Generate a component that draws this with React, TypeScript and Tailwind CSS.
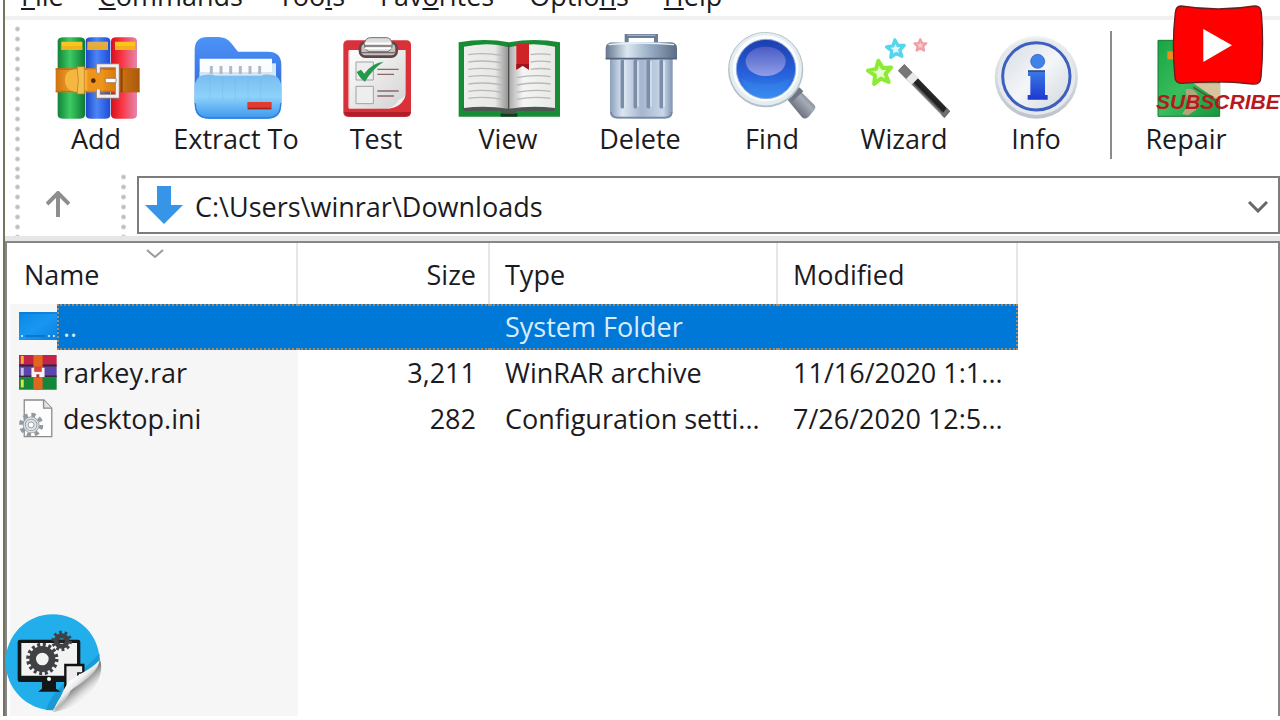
import { useState } from 'react';
import type { ReactNode } from 'react';

function ToolIcon({ x, children }: { x: number; children: ReactNode }) {
  return (
    <svg viewBox={`${x} 93 330 270`} className="w-[110px] h-[90px]" aria-hidden="true">
      {children}
    </svg>
  );
}

function AddIcon() {
  return (
    <ToolIcon x={123}>
      <defs>
        <linearGradient id="bookGreen">
          <stop offset="0" stopColor="#12813a" />
          <stop offset=".45" stopColor="#3ecb63" />
          <stop offset="1" stopColor="#0c7a35" />
        </linearGradient>
        <linearGradient id="bookBlue">
          <stop offset="0" stopColor="#1c46c9" />
          <stop offset=".45" stopColor="#4b86f7" />
          <stop offset="1" stopColor="#1d4bd6" />
        </linearGradient>
        <linearGradient id="bookRed">
          <stop offset="0" stopColor="#d3101f" />
          <stop offset=".4" stopColor="#fb3340" />
          <stop offset="1" stopColor="#e487ae" />
        </linearGradient>
        <linearGradient id="belt">
          <stop offset="0" stopColor="#d2730d" />
          <stop offset=".3" stopColor="#f9b845" />
          <stop offset=".6" stopColor="#e88a12" />
          <stop offset="1" stopColor="#a9580d" />
        </linearGradient>
      </defs>
      <path d="M173 124q0-12 18-12h46q18 0 18 12v220q0 12-18 12h-46q-18 0-18-12z" fill="url(#bookGreen)" />
      <path d="M257 124q0-12 16-12h42q16 0 16 12v220q0 12-16 12h-42q-16 0-16-12z" fill="url(#bookBlue)" />
      <path d="M333 124q0-12 16-12h46q16 0 16 12v220q0 12-16 12h-46q-16 0-16-12z" fill="url(#bookRed)" />
      <path d="M184 125h63v25h-63zM345 125h61v25h-61z" fill="#f8c61c" />
      <path d="M262 125h62v25h-62z" fill="#dfae4b" />
      <path d="M184 138h63v12h-63zM345 138h61v12h-61zM262 138h62v12h-62z" fill="#eda51d" opacity=".6" />
      <path d="M167 205h252v72H167z" fill="url(#belt)" />
      <path d="M167 205h252v5H167zM167 272h252v5H167z" fill="#b8650b" opacity=".7" />
      <path d="M195 240q0-34 38-32v68q-38-2-38-36z" fill="#f5b73f" />
      <path d="M231 200h22v82h-22q8-41 0-82z" fill="#f2c050" stroke="#bf7416" strokeWidth="2" />
      <path d="M262 208h48v66h-48z" fill="#ef941b" />
      <circle cx="280" cy="242" r="7" fill="#552709" />
      <path d="M295 218v-21h57v92h-57v-21" fill="none" stroke="#8f7a76" strokeWidth="14" />
      <path d="M295 218v-21h57v92h-57v-21" fill="none" stroke="#f1eff2" strokeWidth="9" />
      <path d="M316 235h32v13h-32z" fill="#fff" stroke="#8c6552" strokeWidth="2" />
      <path d="M361 205h7v72h-7z" fill="#7c2f0a" opacity=".7" />
    </ToolIcon>
  );
}

function ExtractIcon() {
  return (
    <ToolIcon x={543}>
      <defs>
        <linearGradient id="folderBack" x2="0" y2="1">
          <stop offset="0" stopColor="#4d93f8" />
          <stop offset="1" stopColor="#2f62d8" />
        </linearGradient>
        <linearGradient id="folderFront" x2="0" y2="1">
          <stop offset="0" stopColor="#78bcf0" />
          <stop offset=".5" stopColor="#8dd2fa" />
          <stop offset="1" stopColor="#3c97ee" />
        </linearGradient>
      </defs>
      <path d="M584 150q0-39 39-39h32q24 0 39 19l20 25h90q40 0 40 40v116H584z" fill="url(#folderBack)" />
      <path d="M808 190h20v60h-20z" fill="#d4e6fc" />
      <path d="M599 176h217v90H599z" fill="#fafcff" />
      <path d="M599 216h217v40H599z" fill="#d7e4f1" />
      <g stroke="#b3bac4" strokeWidth="9">
        <path d="M634 198v24M663 198v24M692 198v24M721 198v24M750 198v24M779 198v24" />
      </g>
      <path d="M584 258q4-34 36-34q18-1 26 3h138q8-4 24-3q32 0 36 34v56q0 42-42 42H626q-42 0-42-42z" fill="url(#folderFront)" />
      <path d="M630 232v68M668 232v68M706 232v68M744 232v68M782 232v68" stroke="#69b4ea" strokeWidth="3" opacity=".3" />
      <path d="M586 310q0 44 40 44h176q40 0 40-44" fill="none" stroke="#2f7de0" strokeWidth="4" />
      <rect x="742" y="306" width="73" height="23" rx="2" fill="#df3b31" />
      <path d="M744 325h69" stroke="#a9231d" strokeWidth="4" />
    </ToolIcon>
  );
}

function TestIcon() {
  return (
    <ToolIcon x={3}>
      <defs>
        <linearGradient id="testPaper" x2="1" y2="1">
          <stop offset="0" stopColor="#ffffff" />
          <stop offset="1" stopColor="#d2d2d2" />
        </linearGradient>
      </defs>
      <rect x="70" y="121" width="203" height="229" rx="13" fill="#d9303a" />
      <path d="M72 336q4 14 16 14h168q14 0 16-14z" fill="#b01e29" />
      <path d="M87 150h170v132q-10 42-54 44H87z" fill="url(#testPaper)" />
      <path d="M257 286q-10 34-54 40q26-10 32-26q14-4 22-14z" fill="#f2eeee" />
      <path d="M87 152v172" stroke="#f6c9cb" strokeWidth="4" />
      <path d="M108 186h52v54h-52zM108 259h52v52h-52z" fill="#eeeeee" stroke="#a2a2a2" strokeWidth="3" />
      <path d="M110 216l13-7 10 12q22-32 58-36q-34 22-56 60q-14-8-25-29z" fill="#24984c" />
      <path d="M172 208h64M172 223h50M172 273h64M172 288h50" stroke="#8b6868" strokeWidth="4" />
      <rect x="120" y="128" width="110" height="42" rx="16" fill="#c5c1be" stroke="#5d4848" strokeWidth="8" />
      <rect x="134" y="113" width="82" height="42" rx="17" fill="#dcdcdc" stroke="#6f6b6a" strokeWidth="3" />
      <path d="M134 130h80M134 145h80" stroke="#fff" strokeWidth="5" />
      <path d="M134 138h80M124 158h102" stroke="#736b69" strokeWidth="4" />
    </ToolIcon>
  );
}

function ViewIcon() {
  return (
    <ToolIcon x={399}>
      <defs>
        <linearGradient id="pageLeft">
          <stop offset="0" stopColor="#eeeeec" />
          <stop offset=".7" stopColor="#e8e8e6" />
          <stop offset="1" stopColor="#939393" />
        </linearGradient>
        <linearGradient id="pageRight">
          <stop offset="0" stopColor="#aaaaaa" />
          <stop offset=".3" stopColor="#f5f5f5" />
          <stop offset="1" stopColor="#e8e8e6" />
        </linearGradient>
      </defs>
      <path d="M416 127q80-14 151 0q76-14 153 0v223H416z" fill="#188b35" />
      <path d="M542 340h50v10h-50z" fill="#173a20" />
      <path d="M430 320h274v13H592l-10 8h-30l-10-8H430z" fill="#4d5650" />
      <path d="M432 140q75-16 133 2v184q-70-10-133-2z" fill="url(#pageLeft)" />
      <path d="M567 142q70-18 138-2v184q-70-8-138 2z" fill="url(#pageRight)" />
      <path d="M566 132v198" stroke="#4d4d4d" strokeWidth="4" />
      <g stroke="#b8b8b8" strokeWidth="4" fill="none">
        <path d="M445 164q50-7 103 3M445 186q50-7 103 3M445 208q50-7 103 3M445 230q50-7 103 3M445 252q50-7 103 3M445 274q50-7 103 3M445 295q50-7 103 3" />
        <path d="M632 164q30-5 60 0M632 186q30-5 60 0M632 208q30-5 60 0M590 233q50-10 102-3M590 255q50-10 102-3M590 277q50-10 102-3M590 298q50-10 102-3" />
      </g>
      <path d="M589 131h38v78l-19-12-19 12z" fill="#cf2327" />
      <path d="M589 192h38v17l-19-12-19 12z" fill="#9c1519" />
    </ToolIcon>
  );
}

function DeleteIcon() {
  return (
    <ToolIcon x={795}>
      <defs>
        <linearGradient id="binBody">
          <stop offset="0" stopColor="#8b9fbc" />
          <stop offset=".2" stopColor="#dce6f2" />
          <stop offset=".5" stopColor="#a6b6cd" />
          <stop offset=".85" stopColor="#c8d7e8" />
          <stop offset="1" stopColor="#7e92b0" />
        </linearGradient>
        <linearGradient id="binLid">
          <stop offset="0" stopColor="#64778f" />
          <stop offset=".3" stopColor="#dce7f1" />
          <stop offset=".6" stopColor="#9cb0c7" />
          <stop offset="1" stopColor="#5b6d86" />
        </linearGradient>
      </defs>
      <path d="M920 128v-20h88v20" fill="none" stroke="#6b7c94" strokeWidth="12" />
      <path d="M922 106h84" stroke="#9caec6" strokeWidth="4" />
      <path d="M870 176h188v160q0 20-22 20H892q-22 0-22-20z" fill="url(#binBody)" />
      <path d="M873 336q2 17 22 17h138q20 0 22-17" fill="none" stroke="#7487a3" strokeWidth="5" />
      <path d="M907 184v136M946 184v136M985 184v136M1024 184v136" stroke="#7b8da9" strokeWidth="11" strokeLinecap="round" />
      <path d="M915 184v136M954 184v136M993 184v136M1032 184v136" stroke="#e2ebf5" strokeWidth="4" />
      <path d="M857 144q0-17 24-17h168q22 0 22 17v32H857z" fill="url(#binLid)" />
      <path d="M866 134q96-10 196 0" stroke="#e9f1f8" strokeWidth="4" fill="none" />
      <path d="M857 176h214" stroke="#53657e" strokeWidth="5" />
    </ToolIcon>
  );
}

function FindIcon() {
  return (
    <ToolIcon x={111}>
      <defs>
        <linearGradient id="lens" x2="0" y2="1">
          <stop offset="0" stopColor="#1d3eae" />
          <stop offset=".6" stopColor="#2862dc" />
          <stop offset="1" stopColor="#368ff0" />
        </linearGradient>
        <linearGradient id="lensShine" x2="0" y2="1">
          <stop offset="0" stopColor="#4a5cc4" />
          <stop offset="1" stopColor="#8f9ee8" />
        </linearGradient>
        <linearGradient id="handle" x1="0" y1="1" x2="1" y2="0">
          <stop offset="0" stopColor="#373b44" />
          <stop offset=".6" stopColor="#a6abb8" />
          <stop offset="1" stopColor="#555964" />
        </linearGradient>
      </defs>
      <path d="M320 296l34-30 50 50q6 8-6 20l-12 14q-12 10-20 2z" fill="url(#handle)" />
      <path d="M326 290l32-28 12 12-34 32z" fill="#6f7685" />
      <circle cx="257" cy="209" r="113" fill="#b4c1c7" />
      <circle cx="257" cy="207" r="109" fill="#e4eef2" />
      <circle cx="257" cy="205" r="99" fill="#fbfdfd" />
      <circle cx="258" cy="207" r="89" fill="url(#lens)" stroke="#8aa9df" strokeWidth="3" />
      <ellipse cx="257" cy="184" rx="60" ry="44" fill="url(#lensShine)" />
      <path d="M184 236q74 34 148 0q-18 54-74 56q-56-2-74-56z" fill="#3a8aee" opacity=".3" />
    </ToolIcon>
  );
}

function WizardIcon() {
  const star = 'M0-36L10-13 35-11 16 6 22 31 0 18-22 31-16 6-35-11-10-13z';

  return (
    <ToolIcon x={507}>
      <defs>
        <linearGradient id="wand" gradientUnits="userSpaceOnUse" x1="716" y1="276" x2="740" y2="252">
          <stop offset="0" stopColor="#9a9a9a" />
          <stop offset=".35" stopColor="#1e1e1e" />
          <stop offset=".8" stopColor="#2c2c2c" />
          <stop offset="1" stopColor="#777777" />
        </linearGradient>
      </defs>
      <g strokeLinejoin="round">
        <path d={star} transform="translate(600 218) rotate(-8)" fill="#e6fbd0" stroke="#8deb35" strokeWidth="12" />
        <path d={star} transform="translate(647 147) rotate(-5) scale(.76)" fill="#dcf8fd" stroke="#55d6ee" strokeWidth="13" />
        <path d={star} transform="translate(721 136) scale(.5)" fill="#f8cfd2" stroke="#f0a0a6" strokeWidth="14" />
      </g>
      <path d="M654 212l19-19 137 141-17 20z" fill="url(#wand)" />
      <path d="M654 212l19-19 30 31-18 20z" fill="#77777a" />
      <path d="M678 237l20-20 17 17-20 20z" fill="#e9e9e9" />
      <path d="M784 344l17-20 9 10-17 20z" fill="#707070" />
    </ToolIcon>
  );
}

function InfoIcon() {
  return (
    <ToolIcon x={3}>
      <defs>
        <linearGradient id="infoRim" x2="0" y2="1">
          <stop offset="0" stopColor="#f0f2f5" />
          <stop offset="1" stopColor="#bcc3cb" />
        </linearGradient>
        <linearGradient id="infoFace" x2="1" y2="1">
          <stop offset="0" stopColor="#d5dce4" />
          <stop offset=".5" stopColor="#f4f6f8" />
          <stop offset="1" stopColor="#ced6de" />
        </linearGradient>
        <linearGradient id="infoBlue" x2="0" y2="1">
          <stop offset="0" stopColor="#3b7ae6" />
          <stop offset="1" stopColor="#1c38cf" />
        </linearGradient>
      </defs>
      <ellipse cx="169" cy="232" rx="125" ry="124" fill="url(#infoRim)" />
      <ellipse cx="169" cy="230" rx="117" ry="115" fill="#e5e9ee" />
      <circle cx="169" cy="229" r="101" fill="url(#infoFace)" stroke="#3d5fbd" strokeWidth="9" />
      <circle cx="173" cy="184" r="21" fill="#3e82ea" stroke="#2b55b4" strokeWidth="2" />
      <path d="M144 212h51v73h8v14h-60v-14h8v-57h-7z" fill="url(#infoBlue)" />
      <path d="M144 213h51" stroke="#233c7c" strokeWidth="4" />
    </ToolIcon>
  );
}

function RepairIcon() {
  return (
    <ToolIcon x={453}>
      <defs>
        <linearGradient id="repairCover" x2="1" y2="1">
          <stop offset="0" stopColor="#19a544" />
          <stop offset=".5" stopColor="#39bd5d" />
          <stop offset="1" stopColor="#16963c" />
        </linearGradient>
      </defs>
      <path d="M534 121h185v228H534z" fill="url(#repairCover)" stroke="#127c33" strokeWidth="3" />
      <path d="M562 154h60v24h-60z" fill="#f08c19" />
      <path d="M640 250l70 48 10-8v-40z" fill="#d8c39c" />
      <path d="M616 268q26-8 38 18l-6 44-24 16-18-4 18-26z" fill="#b7a27d" />
      <path d="M640 262l66 40" stroke="#4c5e3b" strokeWidth="5" />
    </ToolIcon>
  );
}

function FolderRowIcon() {
  return (
    <svg viewBox="0 0 38 36" className="w-[38px] h-9" aria-hidden="true">
      <defs>
        <linearGradient id="drive" x2="1" y2="1">
          <stop offset="0" stopColor="#0a86e4" />
          <stop offset=".5" stopColor="#1897f2" />
          <stop offset="1" stopColor="#0b80de" />
        </linearGradient>
      </defs>
      <path d="M0 3h38v28H0z" fill="url(#drive)" />
      <path d="M1 4h37" stroke="#0673cc" strokeWidth="1" />
      <path d="M6 27h20" stroke="#075da9" strokeWidth="1" />
      <path d="M2 27h2M29 27h2M34 27h2" stroke="#a8dbff" strokeWidth="2" />
    </svg>
  );
}

function RarRowIcon() {
  return (
    <svg viewBox="58 188 116 108" className="w-[38px] h-9" aria-hidden="true">
      <path d="M58 187h115v33H58z" fill="#c32348" />
      <path d="M58 221h115v34H58z" fill="#5a45a8" />
      <path d="M58 256h115v37H58z" fill="#15873b" />
      <path d="M58 216h115v6H58zM58 250h115v6H58z" fill="#3b2240" />
      <path d="M68 190v24" stroke="#f4b03b" strokeWidth="9" />
      <path d="M68 226v24" stroke="#c9bde8" strokeWidth="9" />
      <path d="M68 262v24" stroke="#e7df35" strokeWidth="9" />
      <path d="M102 187h28v106h-28z" fill="#e2661d" />
      <path d="M96 226h9v28h-9zM127 226h9v28h-9zM105 238h22v16h-22z" fill="#f6f2f5" />
      <path d="M105 222h22v16h-22z" fill="#d8443b" />
      <path d="M111 246h9v10h-9z" fill="#a33b3b" />
    </svg>
  );
}

function IniRowIcon() {
  return (
    <svg viewBox="58 324 116 120" className="w-[38px] h-10" aria-hidden="true">
      <path d="M74 326h60l24 25v87H74z" fill="#fdfdfd" stroke="#8c8c8c" strokeWidth="4" />
      <path d="M133 326v25h25" fill="#e3e3e3" stroke="#8c8c8c" strokeWidth="4" />
      <circle cx="95" cy="402" r="31" fill="none" stroke="#929aa0" strokeWidth="12" strokeDasharray="13 11.3" />
      <circle cx="95" cy="402" r="21" fill="#dfe4e8" stroke="#929aa0" strokeWidth="9" />
      <circle cx="95" cy="402" r="21" fill="none" stroke="#dce2e6" strokeWidth="4" />
      <circle cx="95" cy="402" r="9" fill="#fff" stroke="#929aa0" strokeWidth="3" />
    </svg>
  );
}

function ChannelBadge() {
  return (
    <svg viewBox="12 36 324 312" className="absolute left-1 bottom-1 w-[108px] h-[104px]" aria-hidden="true">
      <defs>
        <linearGradient id="curl" gradientUnits="userSpaceOnUse" x1="214" y1="240" x2="240" y2="268">
          <stop offset="0" stopColor="#ffffff" />
          <stop offset=".5" stopColor="#e9eaeb" />
          <stop offset="1" stopColor="#9fa1a3" />
        </linearGradient>
        <linearGradient id="curlShadow" gradientUnits="userSpaceOnUse" x1="226" y1="254" x2="262" y2="296">
          <stop offset="0" stopColor="#7c7c7c" />
          <stop offset=".45" stopColor="#c8c8c8" />
          <stop offset="1" stopColor="#f6f6f6" stopOpacity="0" />
        </linearGradient>
      </defs>
      <path d="M299 176Q314 214 282 264Q236 326 158 336Q190 312 210 270Q270 224 299 176z" fill="url(#curlShadow)" />
      <path d="M158 43C240 43 299 108 299 184C262 226 196 246 160 331C80 330 17 266 17 186C17 106 80 43 158 43z" fill="#22aeea" />
      <path d="M299 160q-46 50-92 78q-48 34-70 92l23 1q36-85 139-147z" fill="#1791cc" opacity=".7" />
      <rect x="53" y="119" width="188" height="127" rx="7" fill="#141718" />
      <path d="M64 129h167v98H64z" fill="#f3f3f4" />
      <circle cx="147" cy="237" r="6" fill="#fff" />
      <path d="M126 246h42v20l14 9h-68l12-9z" fill="#141718" />
      <g fill="none" stroke="#3f4144">
        <circle cx="127" cy="177" r="42" strokeWidth="13" strokeDasharray="8.8 7.7" />
        <circle cx="127" cy="177" r="29" strokeWidth="20" />
        <circle cx="185" cy="123" r="26" strokeWidth="10" strokeDasharray="8.2 8.1" />
        <circle cx="185" cy="123" r="16" strokeWidth="15" />
      </g>
      <path d="M176 119h17v10h-17z" fill="#202325" />
      <path d="M205 271h-9v-76h54v36" fill="#ececee" stroke="#111" strokeWidth="7" />
      <path d="M234 240v-21h30" fill="#f4f4f4" stroke="#111" strokeWidth="5" />
      <path d="M299 180C268 216 226 222 202 252C182 280 180 310 158 331C184 326 196 300 212 272C240 250 292 226 299 180z" fill="url(#curl)" />
    </svg>
  );
}

function SubscribeSticker() {
  return (
    <div className="absolute top-1 left-[1156px] flex flex-col items-center">
      <svg viewBox="584 12 276 246" className="w-[92px] h-[82px]" aria-hidden="true">
        <path
          d="M611 18Q723 36 832 18Q851 17 852 38Q860 132 851 232Q850 254 826 252Q723 240 612 250Q594 250 593 232Q583 130 594 38Q595 19 611 18z"
          fill="#fe0000"
          stroke="#6b1c1c"
          strokeWidth="4"
        />
        <path d="M678 87l86 49-86 50z" fill="#fff" />
      </svg>
      <span className="font-['Liberation_Sans',sans-serif] text-[21px] leading-8 font-bold italic text-[#b5191d]">
        SUBSCRIBE
      </span>
    </div>
  );
}

function Grip() {
  return (
    <span className="w-[5px] shrink-0 bg-[radial-gradient(circle,#bdbdbd_1px,#d2d2d2_2px,transparent_3px)] bg-[length:5px_10px]" />
  );
}

const menus = [
  ['', 'F', 'ile'],
  ['', 'C', 'ommands'],
  ['Too', 'l', 's'],
  ['Fav', 'o', 'rites'],
  ['Optio', 'n', 's'],
  ['', 'H', 'elp'],
];

const tools = [
  { label: 'Add', icon: <AddIcon /> },
  { label: 'Extract To', icon: <ExtractIcon />, wide: true },
  { label: 'Test', icon: <TestIcon /> },
  { label: 'View', icon: <ViewIcon /> },
  { label: 'Delete', icon: <DeleteIcon /> },
  { label: 'Find', icon: <FindIcon /> },
  { label: 'Wizard', icon: <WizardIcon /> },
  { label: 'Info', icon: <InfoIcon /> },
  { label: 'Repair', icon: <RepairIcon />, divided: true },
];

const files = [
  { name: '..', size: '', type: 'System Folder', modified: '', icon: <FolderRowIcon /> },
  { name: 'rarkey.rar', size: '3,211', type: 'WinRAR archive', modified: '11/16/2020 1:1...', icon: <RarRowIcon /> },
  { name: 'desktop.ini', size: '282', type: 'Configuration setti...', modified: '7/26/2020 12:5...', icon: <IniRowIcon /> },
];

const picked = 'bg-[#0078d7] text-[#d9ecfb] border-dotted border-[#a98a63]';

function App() {
  const [path, setPath] = useState('C:\\Users\\winrar\\Downloads');
  const [selected, setSelected] = useState('..');

  return (
    <div className="relative min-h-screen flex flex-col overflow-hidden bg-white pl-[3px] pb-1 font-['Open_Sans',sans-serif] text-[27px] leading-9 text-[#1b1b1f]">
      <div className="flex-1 flex flex-col border-l-2 border-[#75755f]">
        <nav className="h-5 flex items-end gap-[35px] pl-4 pb-0.5 border-b-4 border-[#f1f1f1]">
          {menus.map(([before, key, after]) => (
            <button key={before + key + after} className="shrink-0">
              {before}
              <span className="underline decoration-2 underline-offset-2">{key}</span>
              {after}
            </button>
          ))}
        </nav>

        <div className="flex h-[152px] pl-2.5 pt-1">
          <Grip />
          <div className="flex pl-2.5 pt-[7px]">
            {tools.map(({ label, icon, wide, divided }) => (
              <div key={label} className="flex items-start shrink-0">
                {divided && <span className="w-0.5 h-32 mx-2 bg-[#8c8c8c]" />}
                <button className={`flex flex-col items-center ${wide ? 'w-[148px]' : 'w-[132px]'}`}>
                  {icon}
                  {label}
                </button>
              </div>
            ))}
          </div>
        </div>

        <div className="flex h-16 pl-2.5">
          <Grip />
          <button className="w-[76px] grid place-items-center" aria-label="Up one level">
            <svg viewBox="0 0 24 26" className="w-6 h-[26px]" fill="none" stroke="#8e8e8e" strokeWidth="4">
              <path d="M12 26V3M1 13L12 2l11 11" />
            </svg>
          </button>
          <span className="w-[25px]" />
          <Grip />
          <div className="flex-1 flex items-center ml-[11px] mt-1 mb-0.5 border-2 border-[#7c7c7c] pl-1.5">
            <svg viewBox="0 0 38 38" className="w-[38px] h-[38px]" aria-hidden="true">
              <path d="M12 0h14v19h12L19 38 0 19h12z" fill="#3695e6" />
            </svg>
            <input
              aria-label="Path"
              className="flex-1 min-w-0 ml-3 pt-1 bg-transparent outline-none"
              value={path}
              onChange={(e) => setPath(e.target.value)}
            />
            <button className="w-10 h-full pt-1 grid place-items-center" aria-label="Recent folders">
              <svg viewBox="0 0 20 12" className="w-5 h-3" fill="none" stroke="#686868" strokeWidth="3">
                <path d="M1 1l9 9 9-9" />
              </svg>
            </button>
          </div>
        </div>

        <div className="h-[5px] bg-[#e6e6e6]" />

        <main className="flex-1 border-2 border-b-0 border-[#85858b] bg-[linear-gradient(90deg,#fff_3px,#f6f6f6_3px,#f6f6f6_291px,#fff_291px)]">
          <table className="w-full table-fixed border-separate border-spacing-0 text-left whitespace-nowrap">
            <colgroup>
              <col className="w-[291px]" />
              <col className="w-48" />
              <col className="w-[288px]" />
              <col className="w-60" />
              <col />
            </colgroup>
            <thead className="bg-white">
              <tr className="h-[61px]">
                <th className="relative pl-[17px] pt-0.5 font-normal border-r-2 border-[#e6e6e6]">
                  Name
                  <svg viewBox="0 0 18 10" className="absolute top-1.5 left-[139px] w-[18px] h-2.5" fill="none" stroke="#9a9a9a" strokeWidth="2">
                    <path d="M1 1l8 7 8-7" />
                  </svg>
                </th>
                <th className="pr-3 pt-0.5 text-right font-normal border-r-2 border-[#e6e6e6]">Size</th>
                <th className="pl-[15px] pt-0.5 font-normal border-r-2 border-[#e6e6e6]">Type</th>
                <th className="pl-[15px] pt-0.5 font-normal border-r-2 border-[#e6e6e6]">Modified</th>
                <th aria-hidden="true" />
              </tr>
            </thead>
            <tbody>
              {files.map((file) => {
                const on = file.name === selected;
                return (
                  <tr key={file.name} className="h-[46px]" onClick={() => setSelected(file.name)}>
                    <td className="p-0">
                      <div className="flex items-center h-[46px] pl-3">
                        {file.icon}
                        <span className={`flex-1 h-full pl-1 ${on ? `${picked} border-y-2 border-l-2 pt-[3px]` : 'border-l-2 border-transparent pt-[5px]'}`}>
                          {file.name}
                        </span>
                      </div>
                    </td>
                    <td className={`p-0 pr-3.5 text-right ${on ? `${picked} border-y-2` : ''}`}>{file.size}</td>
                    <td className={`p-0 pl-[15px] ${on ? `${picked} border-y-2` : ''}`}>{file.type}</td>
                    <td className={`p-0 pl-[15px] ${on ? `${picked} border-y-2 border-r-2` : ''}`}>{file.modified}</td>
                    <td />
                  </tr>
                );
              })}
            </tbody>
          </table>
        </main>
      </div>

      <ChannelBadge />
      <SubscribeSticker />
    </div>
  );
}

export default App;
